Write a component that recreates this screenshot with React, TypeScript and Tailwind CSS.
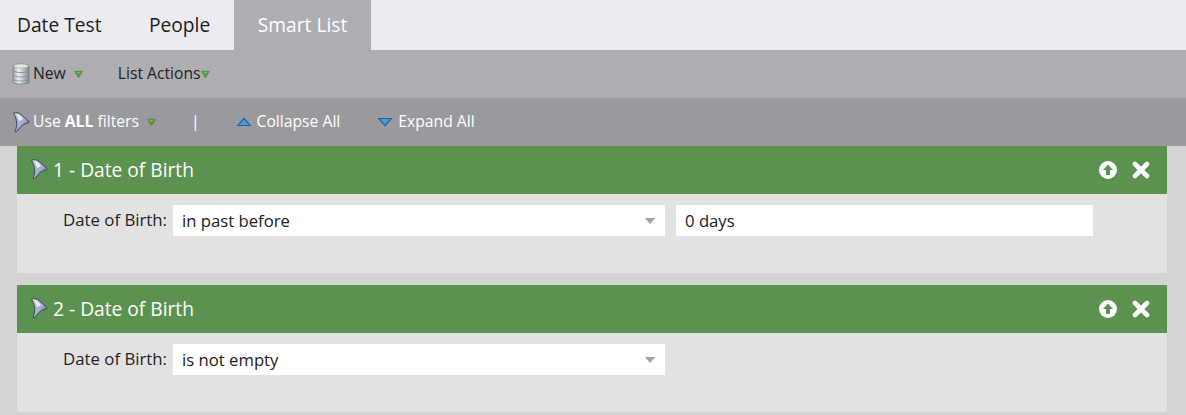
import React from 'react';

const GreenCaret: React.FC<{ className?: string }> = ({ className }) => (
    <svg width="9" height="9" viewBox="0 0 9 9" className={className}>
        <path d="M0.5 1.2 H8.5 L4.5 8 Z" fill="#4f9a35" stroke="#4a8a34" strokeWidth="0.5" />
        <path d="M2.5 2 H6.5 L4.5 3.8 Z" fill="#86c766" />
    </svg>
);

const DbIcon: React.FC = () => (
    <svg width="18" height="22" viewBox="0 0 18 22">
        <defs>
            <linearGradient id="db" x1="0" x2="1" y1="0" y2="0">
                <stop offset="0" stopColor="#98a3ab" />
                <stop offset="0.35" stopColor="#eef1f3" />
                <stop offset="1" stopColor="#7d8890" />
            </linearGradient>
        </defs>
        <path d="M1 3 C1 0.5 17 0.5 17 3 V19 C17 21.6 1 21.6 1 19 Z" fill="url(#db)" stroke="#6f7982" strokeWidth="0.7" />
        <ellipse cx="9" cy="3" rx="7.5" ry="2" fill="#e4e8eb" stroke="#8c959d" strokeWidth="0.5" />
        <path d="M1.5 8 C4 10 14 10 16.5 8 M1.5 12.5 C4 14.5 14 14.5 16.5 12.5 M1.5 16.5 C4 18.5 14 18.5 16.5 16.5" fill="none" stroke="#87919a" strokeWidth="0.9" />
    </svg>
);

const FunnelIcon: React.FC<{ id: string }> = ({ id }) => (
    <svg width="18" height="21" viewBox="0 0 18 21">
        <defs>
            <linearGradient id={id} x1="0" x2="1" y1="0" y2="1">
                <stop offset="0" stopColor="#c9cbd0" />
                <stop offset="0.55" stopColor="#a3abd2" />
                <stop offset="1" stopColor="#2f3550" />
            </linearGradient>
        </defs>
        <path d="M1.5 1 C4 0.3 7 0.6 9 2.5 L17 9.5 C17.4 10 17.2 10.6 16.5 10.8 C13 11.6 10.5 13 9 14.5 L4.5 20 L3 19.5 C4.5 16 5 12 4.4 8.5 C3.8 5.5 2.6 3.2 1.5 1 Z" fill={`url(#${id})`} stroke="#3a3f55" strokeWidth="0.9" strokeLinejoin="round" />
        <path d="M4 2 C6.5 2 9 4 11 7 L7 9 C6.5 6.5 5.5 4 4 2 Z" fill="#eceef5" />
    </svg>
);

const Tri: React.FC<{ down?: boolean }> = ({ down }) => (
    <svg width="16" height="10" viewBox="0 0 16 10" className="block">
        <path d={down ? 'M0.5 1 H15.5 L8 9.5 Z' : 'M8 0.5 L15.5 9 H0.5 Z'} fill="#1f5f98" />
        <path d={down ? 'M2.8 2 H13.2 L8 7.8 Z' : 'M8 2.2 L13.2 8 H2.8 Z'} fill="#4c9ad6" />
    </svg>
);

const SelectBox: React.FC<{ value: string }> = ({ value }) => (
    <div className="w-[492px] h-[31px] bg-white flex items-center justify-between pl-[9px] pr-[10px] text-[16.7px] text-[#222]">
        <span>{value}</span>
        <svg width="10" height="6" viewBox="0 0 10 6"><path d="M0 0 H12 L6 6 Z" fill="#a3a3a3" transform="scale(0.85 1)" /></svg>
    </div>
);

const FilterCard: React.FC<{ index: number; value: string; extra?: string }> = ({ index, value, extra }) => (
    <div className="mx-[17px] w-[1150px]">
        <div className="h-[48px] bg-[#5c924f] flex items-center justify-between pl-[13px] pr-[17px] text-white">
            <div className="flex items-center gap-[5px] text-[19.2px]">
                <FunnelIcon id={`fn-card-${index}`} />
                <span>{index} - Date of Birth</span>
            </div>
            <div className="flex items-center gap-[15px]">
                <svg width="18" height="18" viewBox="0 0 18 18">
                    <circle cx="9" cy="9" r="9" fill="#fff" />
                    <path d="M9 3.5 L14 9 H11 V14 H7 V9 H4 Z" fill="#5c924f" />
                </svg>
                <svg width="18" height="18" viewBox="0 0 18 18">
                    <path d="M3 3 L15 15 M15 3 L3 15" stroke="#fff" strokeWidth="4.6" strokeLinecap="round" />
                </svg>
            </div>
        </div>
        <div className="h-[79px] bg-[#e2e2e2] pt-[11px] flex items-start">
            <div className="w-[150px] h-[31px] flex items-center justify-end text-[16.8px] text-[#222] -mt-[1px]">Date of Birth:</div>
            <div className="ml-[6px] flex gap-[11px]">
                <SelectBox value={value} />
                {extra && <div className="w-[417px] h-[31px] bg-white flex items-center pl-[9px] text-[16.7px] text-[#222]">{extra}</div>}
            </div>
        </div>
    </div>
);

export default function App() {
    return (
        <div className="w-[1186px] h-[415px] overflow-hidden bg-[#d4d4d4] font-['Open_Sans',sans-serif]">
            <div className="h-[50px] bg-[#ecebf1] flex items-stretch text-[19.2px]">
                <div className="w-[102px] pl-[17px] flex items-center text-[#1c1c1c]">Date Test</div>
                <div className="w-[132px] pl-[47px] flex items-center text-[#1c1c1c]">People</div>
                <div className="w-[137px] bg-[#aeadb2] flex items-center justify-center text-white">Smart List</div>
            </div>
            <div className="h-[48px] bg-[#aeadb2] flex items-center pl-[12px] text-[15.7px] text-[#222]">
                <DbIcon />
                <span className="ml-[3px]">New</span>
                <GreenCaret className="ml-[8px]" />
                <span className="ml-[35px]">List Actions</span>
                <GreenCaret />
            </div>
            <div className="h-[48px] bg-[#9a999e] flex items-center pl-[12px] text-[15.7px] text-white">
                <FunnelIcon id="fn-bar" />
                <span className="ml-[3px]">Use <b>ALL</b> filters</span>
                <GreenCaret className="ml-[8px]" />
                <span className="ml-[35px]">|</span>
                <span className="ml-[36px]"><Tri /></span>
                <span className="ml-[5px]">Collapse All</span>
                <span className="ml-[37px]"><Tri down /></span>
                <span className="ml-[5px]">Expand All</span>
            </div>
            <div className="flex flex-col gap-[12px]">
                <FilterCard index={1} value="in past before" extra="0 days" />
                <FilterCard index={2} value="is not empty" />
            </div>
        </div>
    );
}
